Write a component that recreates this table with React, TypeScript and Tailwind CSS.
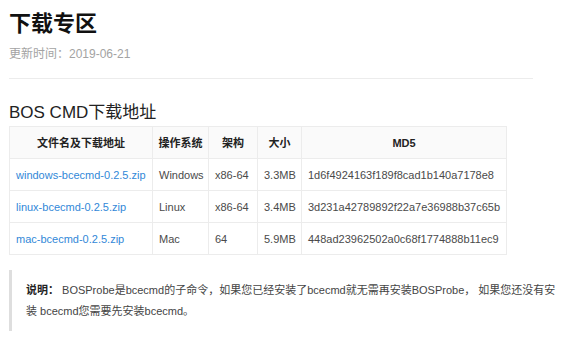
import React from "react";

const rows = [
  { name: "windows-bcecmd-0.2.5.zip", os: "Windows", arch: "x86-64", size: "3.3MB", md5: "1d6f4924163f189f8cad1b140a7178e8" },
  { name: "linux-bcecmd-0.2.5.zip", os: "Linux", arch: "x86-64", size: "3.4MB", md5: "3d231a42789892f22a7e36988b37c65b" },
  { name: "mac-bcecmd-0.2.5.zip", os: "Mac", arch: "64", size: "5.9MB", md5: "448ad23962502a0c68f1774888b11ec9" },
];

export default function App() {
  return (
    <div
      className="w-[567px] h-[337px] bg-white overflow-hidden pl-[9px] pt-[8px] text-[#333]"
      style={{ fontFamily: '"Liberation Sans", "Noto Sans CJK SC", sans-serif' }}
    >
      <h1 className="text-[22px] leading-[32px] font-bold text-[#111]">下载专区</h1>
      <div className="mt-[4px] text-[12px] leading-[20px] text-[#a3a3a3]">更新时间：2019-06-21</div>
      <div className="mt-[14px] w-[524px] h-px bg-[#ececec]" />
      <h2 className="mt-[21px] text-[17px] leading-[26px] text-[#222]">BOS CMD下载地址</h2>
      <table className="border-collapse table-fixed w-[497px] text-[11px] leading-[16px] text-[#4a4a4a]">
        <colgroup>
          <col className="w-[143px]" />
          <col className="w-[56px]" />
          <col className="w-[49px]" />
          <col className="w-[44px]" />
          <col className="w-[205px]" />
        </colgroup>
        <thead>
          <tr className="bg-[#fafafa] h-[32px]">
            <th className="border border-[#ececec] font-bold text-[#222] text-center px-[2px] whitespace-nowrap">文件名及下载地址</th>
            <th className="border border-[#ececec] font-bold text-[#222] text-center px-[2px] whitespace-nowrap">操作系统</th>
            <th className="border border-[#ececec] font-bold text-[#222] text-center px-[2px] whitespace-nowrap">架构</th>
            <th className="border border-[#ececec] font-bold text-[#222] text-center px-[2px] whitespace-nowrap">大小</th>
            <th className="border border-[#ececec] font-bold text-[#222] text-center px-[2px] whitespace-nowrap">MD5</th>
          </tr>
        </thead>
        <tbody>
          {rows.map((r) => (
            <tr key={r.name} className="h-[32px]">
              <td className="border border-[#ececec] px-[6px] text-[#3188d8] whitespace-nowrap">{r.name}</td>
              <td className="border border-[#ececec] px-[6px] whitespace-nowrap">{r.os}</td>
              <td className="border border-[#ececec] px-[6px] whitespace-nowrap">{r.arch}</td>
              <td className="border border-[#ececec] px-[6px] whitespace-nowrap">{r.size}</td>
              <td className="border border-[#ececec] px-[6px] whitespace-nowrap">{r.md5}</td>
            </tr>
          ))}
        </tbody>
      </table>
      <div className="mt-[15px] w-[553px] border-l-[3px] border-[#dedede] pl-[14px] pt-[10px] pb-[9px] text-[11px] leading-[21px] text-[#444]">
        <span className="font-bold text-[#222]">说明：</span> BOSProbe是bcecmd的子命令，如果您已经安装了bcecmd就无需再安装BOSProbe， 如果您还没有安装 bcecmd您需要先安装bcecmd。
      </div>
    </div>
  );
}
